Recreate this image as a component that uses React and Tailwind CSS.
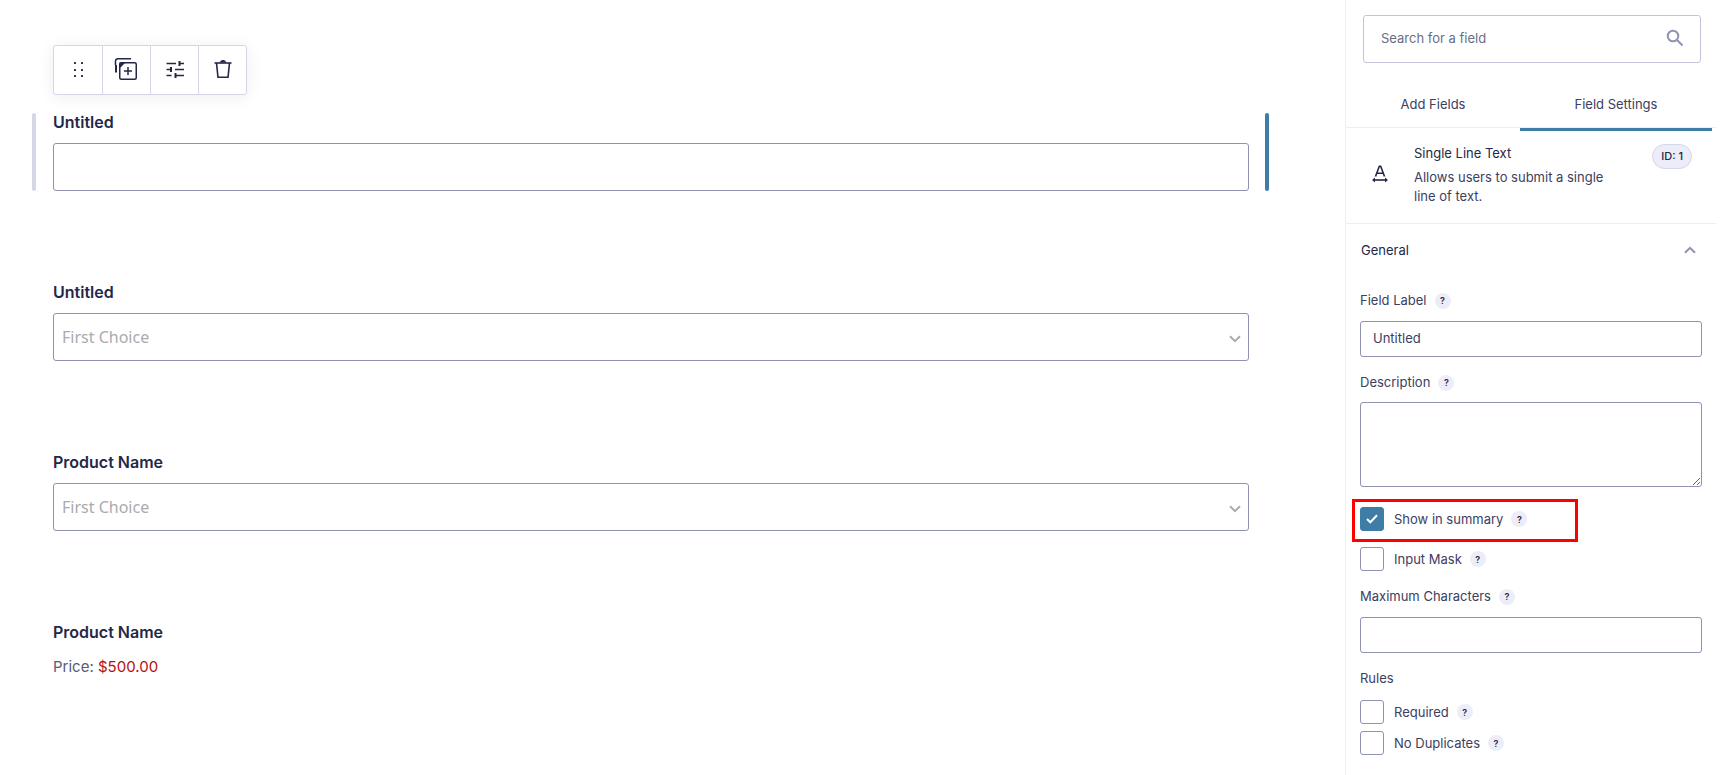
import React from "react";

function DuplicateIcon() {
  return (
    <svg width="24" height="24" viewBox="1 1 24 24" fill="none" stroke="currentColor" className="overflow-visible">
      <path d="M1.500 8V4A2.500 2.500 0 0 1 4 1.700H17" strokeWidth="1.500" />
      <path d="M2 8v7.500" strokeWidth="2" />
      <rect x="5.750" y="5.750" width="16.500" height="16.500" rx="1.500" strokeWidth="1.500" />
      <path d="M5.500 5.500h6l-6 6z" fill="currentColor" stroke="none" />
      <path d="M14 10v8M10 14h8" strokeWidth="1.500" />
    </svg>
  );
}

function DragIcon() {
  return (
    <svg width="24" height="24" viewBox="0 0 24 24" fill="currentColor">
      {[4, 11, 17].map((y) => (
        <React.Fragment key={y}>
          <rect x="8" y={y} width="2" height="2" rx="0.5" />
          <rect x="15" y={y} width="2" height="2" rx="0.5" />
        </React.Fragment>
      ))}
    </svg>
  );
}

function SettingsIcon() {
  return (
    <svg width="24" height="24" viewBox="0 0 24 24" fill="none" stroke="currentColor" strokeWidth="1.400">
      <path d="M3.500 5.500h9.500M16 5.500h5M3.500 11.500H8M12 11.500h9M3.500 17.500h5M12 17.500h9" />
      <path d="M16.500 3v5M8 9v5M12.500 15v5" strokeWidth="2" />
    </svg>
  );
}

function TrashIcon() {
  return (
    <svg width="24" height="24" viewBox="0 0 24 24" fill="none" stroke="currentColor" strokeWidth="1.600">
      <path d="M3.500 5h17" />
      <path d="M9 4.500a3 2.500 0 0 1 6 0z" fill="currentColor" stroke="none" />
      <path d="M5.500 5l1.500 14.300h10L18.500 5" strokeLinejoin="round" />
    </svg>
  );
}

function SearchIcon() {
  return (
    <svg width="18" height="18" viewBox="0 0 18 18" fill="none" stroke="currentColor" strokeWidth="2">
      <circle cx="7" cy="7" r="5.300" />
      <path d="M10.800 10.800l5.700 5.700" />
    </svg>
  );
}

function TextWidthIcon() {
  return (
    <svg width="18" height="18" viewBox="0 0 18 18" fill="none" stroke="currentColor" strokeWidth="1.600">
      <path d="M4.500 11.500L8.300 1.200h1.400l3.800 10.300M6 8.300h6" />
      <path d="M2 15h14" />
      <path d="M1 15l3-2.500v5zM17 15l-3-2.500v5z" fill="currentColor" stroke="none" />
    </svg>
  );
}

function Chevron({ className }) {
  return (
    <svg className={className} width="12" height="8" viewBox="0 0 12 8" fill="none" stroke="currentColor" strokeWidth="2">
      <path d="M1 1.200l5 5 5-5" />
    </svg>
  );
}

const tools = [
  { label: "Move", Icon: DragIcon },
  { label: "Duplicate", Icon: DuplicateIcon },
  { label: "Settings", Icon: SettingsIcon },
  { label: "Delete", Icon: TrashIcon },
];

function Toolbar() {
  return (
    <div className="ml-[21px] flex w-fit rounded-[3px] border border-[#d5d7e9] bg-white shadow-[0_2px_16px_rgba(36,39,72,0.08)]">
      {tools.map(({ label, Icon }) => (
        <button
          key={label}
          type="button"
          aria-label={label}
          className="flex h-12 w-12 items-center justify-center border-[#d5d7e9] not-first:border-l"
        >
          <Icon />
        </button>
      ))}
    </div>
  );
}

function Field({ id, label, selected, children }) {
  return (
    <div className="flex">
      <span className={`w-1 rounded-full ${selected ? "bg-[#d5d7e9]" : ""}`} />
      <div className="flex flex-1 flex-col gap-3 pr-4 pl-[17px]">
        <label htmlFor={id} className="text-base leading-[18px] font-semibold">
          {label}
        </label>
        {children}
      </div>
      <span className={`w-1 rounded-full ${selected ? "bg-[#3e7da6]" : ""}`} />
    </div>
  );
}

function ChoiceSelect({ id }) {
  return (
    <div className="grid items-center">
      <select
        id={id}
        className="col-start-1 row-start-1 h-12 w-full appearance-none rounded-[3px] border border-[#9092b2] bg-white px-2 font-['Noto_Sans',sans-serif] text-base text-[#a9abad]"
      >
        <option>First Choice</option>
      </select>
      <Chevron className="pointer-events-none col-start-1 row-start-1 mt-1 mr-2 justify-self-end text-[#a9abad]" />
    </div>
  );
}

function Help({ topic }) {
  return (
    <button
      type="button"
      aria-label={`Help: ${topic}`}
      className="flex h-4 w-4 items-center justify-center rounded-full bg-[#ecedf8] text-[9px] font-semibold text-[#242748]"
    >
      ?
    </button>
  );
}

function SettingLabel({ id, text }) {
  return (
    <div className="flex items-center gap-2">
      <label htmlFor={id}>{text}</label>
      <Help topic={text} />
    </div>
  );
}

function CheckSetting({ id, text, defaultChecked }) {
  return (
    <div className="flex items-center gap-[10px]">
      <div className="grid place-items-center">
        <input
          id={id}
          type="checkbox"
          defaultChecked={defaultChecked}
          className="peer col-start-1 row-start-1 h-6 w-6 appearance-none rounded-[3px] border border-[#9092b2] bg-white checked:border-[#3e7da6] checked:bg-[#3e7da6]"
        />
        <svg
          className="pointer-events-none col-start-1 row-start-1 hidden text-white peer-checked:block"
          width="12"
          height="10"
          viewBox="0 0 12 10"
          fill="none"
          stroke="currentColor"
          strokeWidth="2"
        >
          <path d="M1 5l3.300 3.300L11 1.300" />
        </svg>
      </div>
      <SettingLabel id={id} text={text} />
    </div>
  );
}

function Sidebar() {
  return (
    <aside className="mr-[14px] w-[371px] shrink-0 border-l border-[#ecedf8] text-[13px] leading-[19px] text-[#3b405f]">
      <div className="mt-[15px] mr-[15px] ml-[17px] flex h-12 items-center rounded-[3px] border border-[#c2c4dc] pr-4 pb-0.5 pl-[17px]">
        <input
          type="text"
          aria-label="Search for a field"
          placeholder="Search for a field"
          className="min-w-0 flex-1 outline-none placeholder:text-[#686e84]"
        />
        <span className="text-[#9092b2]">
          <SearchIcon />
        </span>
      </div>

      <div className="mt-5 flex h-[45px] border-b border-[#ecedf8] pr-1">
        <button type="button" className="flex-1 pb-0.5">
          Add Fields
        </button>
        <button type="button" className="relative w-48 pb-0.5">
          Field Settings
          <span className="absolute inset-x-0 -bottom-1 h-[3px] bg-[#3e7da6]" />
        </button>
      </div>

      <div className="flex h-24 border-b border-[#ecedf8] pt-4 pr-6 pl-[25px]">
        <span className="mt-[21px] text-[#242748]">
          <TextWidthIcon />
        </span>
        <div className="ml-[25px] w-[200px]">
          <h2 className="mb-[5px] text-[#242748]">Single Line Text</h2>
          <p>Allows users to submit a single line of text.</p>
        </div>
        <span className="ml-auto flex h-[25px] items-center rounded-full border border-[#d5d7e9] bg-[#ecedf8] px-2 text-[11px] font-medium text-[#242748]">
          ID: 1
        </span>
      </div>

      <button type="button" className="flex h-[52px] w-full items-center justify-between pr-5 pl-[15px] text-[#242748]">
        <span>General</span>
        <Chevron className="rotate-180 text-[#9092b2]" />
      </button>

      <div className="mx-[14px] mt-[15px] flex flex-col">
        <SettingLabel id="field-label" text="Field Label" />
        <input
          id="field-label"
          type="text"
          defaultValue="Untitled"
          className="mt-[11px] h-9 w-full rounded-[3px] border border-[#9092b2] px-3 pb-0.5"
        />
        <div className="mt-4">
          <SettingLabel id="description" text="Description" />
        </div>
        <textarea id="description" className="mt-[10px] h-[85px] w-full resize rounded-[3px] border border-[#9092b2] px-3 py-2" />

        <div className="mt-3 -ml-2 w-[226px] border-[3px] border-[#ff0000] px-[5px] pt-[5px] pb-2">
          <CheckSetting id="show-in-summary" text="Show in summary" defaultChecked />
        </div>
        <div className="mt-[5px]">
          <CheckSetting id="input-mask" text="Input Mask" />
        </div>
        <div className="mt-4">
          <SettingLabel id="max-characters" text="Maximum Characters" />
        </div>
        <input
          id="max-characters"
          type="text"
          className="mt-[11px] h-9 w-full rounded-[3px] border border-[#9092b2] px-3 pb-0.5"
        />

        <fieldset className="mt-4">
          <legend>Rules</legend>
          <div className="mt-3 flex flex-col gap-[7px]">
            <CheckSetting id="required" text="Required" />
            <CheckSetting id="no-duplicates" text="No Duplicates" />
          </div>
        </fieldset>
      </div>
    </aside>
  );
}

export default function App() {
  return (
    <div className="flex min-h-screen bg-white font-[Inter,sans-serif] text-[#242748]">
      <main className="min-w-0 flex-1 pt-[45px] pr-[76px] pl-8">
        <Toolbar />
        <form className="mt-[18px] flex flex-col gap-[92px]">
          <Field id="text-1" label="Untitled" selected>
            <input id="text-1" type="text" className="h-12 w-full rounded-[3px] border border-[#9092b2] bg-white px-2" />
          </Field>
          <Field id="choice-2" label="Untitled">
            <ChoiceSelect id="choice-2" />
          </Field>
          <Field id="choice-3" label="Product Name">
            <ChoiceSelect id="choice-3" />
          </Field>
          <Field id="price-4" label="Product Name">
            <p className="text-[15px] leading-7 text-[#585b7a]">
              Price: <output id="price-4" className="text-[#b70e0e]">$500.00</output>
            </p>
          </Field>
        </form>
      </main>
      <Sidebar />
    </div>
  );
}
